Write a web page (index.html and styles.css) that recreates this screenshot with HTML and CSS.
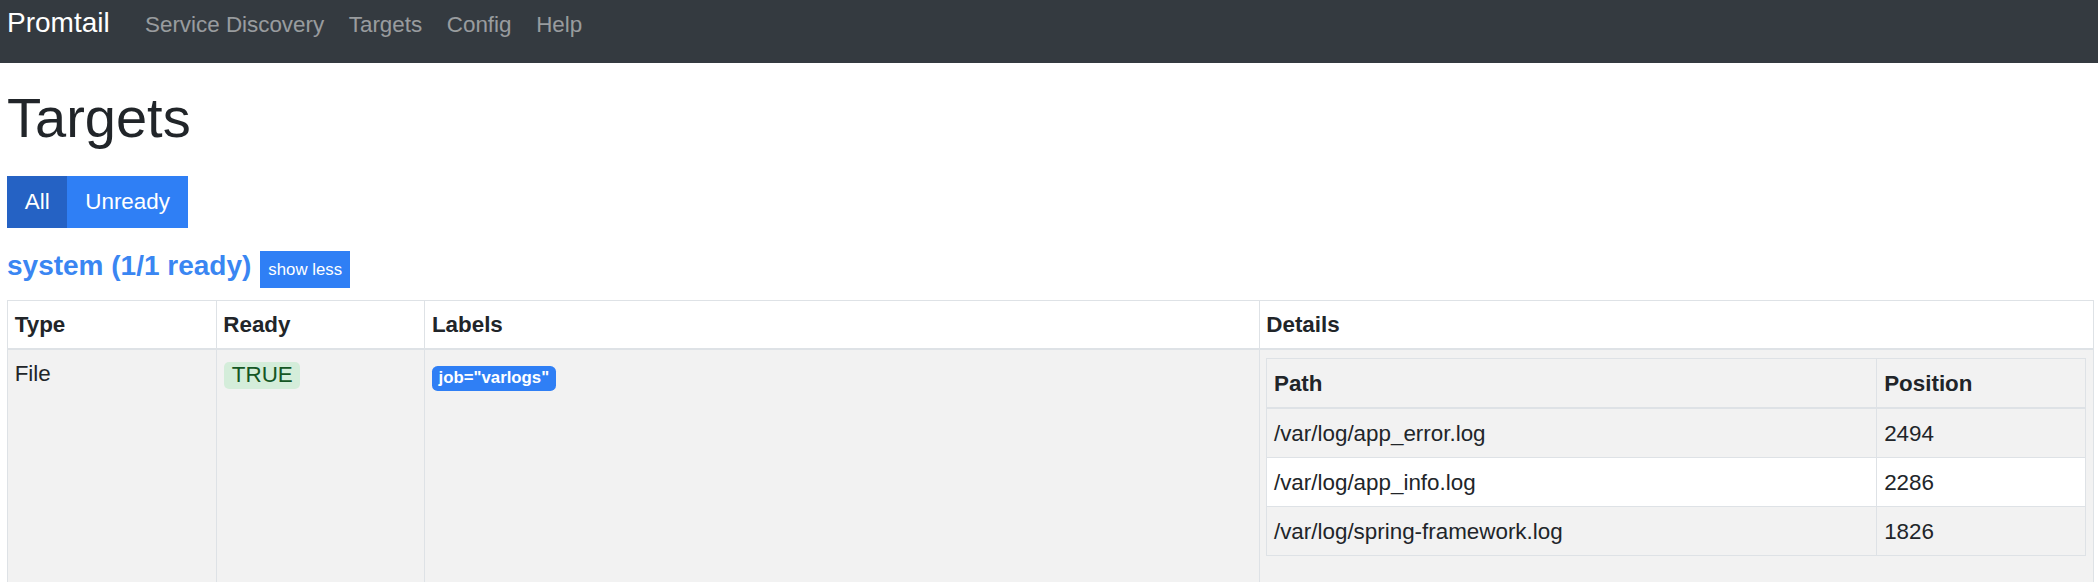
FILE: index.html
```html
<!DOCTYPE html>
<html>
<head>
<meta charset="utf-8">
<title>Promtail</title>
<link rel="stylesheet" href="styles.css">
</head>
<body>
<nav class="navbar">
  <a class="brand" href="#">Promtail</a>
  <a class="nav-link" href="#">Service Discovery</a>
  <a class="nav-link" href="#">Targets</a>
  <a class="nav-link" href="#">Config</a>
  <a class="nav-link" href="#">Help</a>
</nav>
<main class="container">
  <h1 class="title">Targets</h1>
  <div class="btn-group">
    <button class="btn btn-active">All</button>
    <button class="btn">Unready</button>
  </div>
  <div class="pool-head">
    <a class="pool-name" href="#">system (1/1 ready)</a>
    <button class="btn-xs">show less</button>
  </div>
  <table class="table outer">
    <thead>
      <tr>
        <th class="c10">Type</th>
        <th class="c10">Ready</th>
        <th class="c40">Labels</th>
        <th class="c40">Details</th>
      </tr>
    </thead>
    <tbody>
      <tr class="striped">
        <td>File</td>
        <td><span class="ready">TRUE</span></td>
        <td><span class="label">job="varlogs"</span></td>
        <td class="details">
          <table class="table inner">
            <thead>
              <tr>
                <th class="c-path">Path</th>
                <th class="c-pos">Position</th>
              </tr>
            </thead>
            <tbody>
              <tr class="grey"><td>/var/log/app_error.log</td><td>2494</td></tr>
              <tr class="white"><td>/var/log/app_info.log</td><td>2286</td></tr>
              <tr class="grey"><td>/var/log/spring-framework.log</td><td>1826</td></tr>
            </tbody>
          </table>
        </td>
      </tr>
    </tbody>
  </table>
</main>
</body>
</html>
```
FILE: styles.css
```css
html, body {
  margin: 0;
  padding: 0;
  background: #fff;
  color: #212529;
  font-family: "Liberation Sans", Arial, sans-serif;
  font-size: 22.4px;
  line-height: 1.5;
}

.navbar {
  display: flex;
  align-items: baseline;
  height: 63px;
  box-sizing: border-box;
  padding: 2px 7px 0 7px;
  background: #343a40;
}

.brand {
  font-size: 28px;
  line-height: 42px;
  color: #fff;
  text-decoration: none;
  margin-right: 23px;
}

.nav-link {
  font-size: 22.4px;
  line-height: 33.6px;
  padding: 0 12.3px;
  color: rgba(255, 255, 255, 0.5);
  text-decoration: none;
}

.container {
  padding: 0 4px 0 7px;
}

.title {
  margin: 20.8px 0 0 0;
  font-size: 56px;
  font-weight: 400;
  line-height: 1.2;
}

.btn-group {
  display: flex;
  margin-top: 24.7px;
}

.btn {
  font-family: inherit;
  font-size: 22.4px;
  line-height: 33.6px;
  padding: 8.4px 16.8px;
  border: 1.4px solid #2f7ff5;
  background: #2f7ff5;
  color: #fff;
  border-radius: 0;
  margin: 0;
}

.btn-active {
  background: #2562c4;
  border-color: #2562c4;
}

.pool-head {
  display: flex;
  align-items: baseline;
  margin-top: 21px;
  margin-bottom: 12.4px;
}

.pool-name {
  font-size: 28px;
  font-weight: 700;
  line-height: 33.6px;
  color: #3a86f2;
  text-decoration: none;
}

.btn-xs {
  font-family: inherit;
  font-size: 16.8px;
  line-height: 25.2px;
  padding: 4.8px 7px;
  border: 1.4px solid #2f7ff5;
  background: #2f7ff5;
  color: #fff;
  border-radius: 0;
  margin-left: 9px;
}

.table {
  width: 100%;
  border-collapse: collapse;
}

.table th,
.table td {
  padding: 6.7px;
  border: 1.4px solid #dee2e6;
  vertical-align: top;
  text-align: left;
}

.table thead th {
  border-bottom: 2.8px solid #dee2e6;
  font-weight: 700;
}

.outer {
  border: 1.4px solid #dee2e6;
}

.outer .striped {
  background: #f2f2f2;
}

.c10 { width: 10%; }
.c40 { width: 40%; }

.inner {
  margin: 1.3px 0 22.4px 0;
}

.inner th,
.inner td {
  padding: 7.2px 6.7px;
}

.c-path { width: 74.5%; }
.c-pos { width: 25.5%; }

.inner .grey { background: #f2f2f2; }
.inner .white { background: #fff; }

.ready {
  display: inline-block;
  font-size: 22.4px;
  line-height: 22.4px;
  padding: 2.7px 7.5px;
  margin: 1px 0 0 1px;
  background: #d4edda;
  color: #155724;
  border-radius: 5px;
  vertical-align: top;
  margin-top: 4.5px;
}

.label {
  display: inline-block;
  font-size: 16.8px;
  font-weight: 700;
  line-height: 16.8px;
  padding: 4.2px 6.7px;
  background: #2f7ff5;
  color: #fff;
  border-radius: 5.6px;
  vertical-align: top;
  margin-top: 8.5px;
}
```
